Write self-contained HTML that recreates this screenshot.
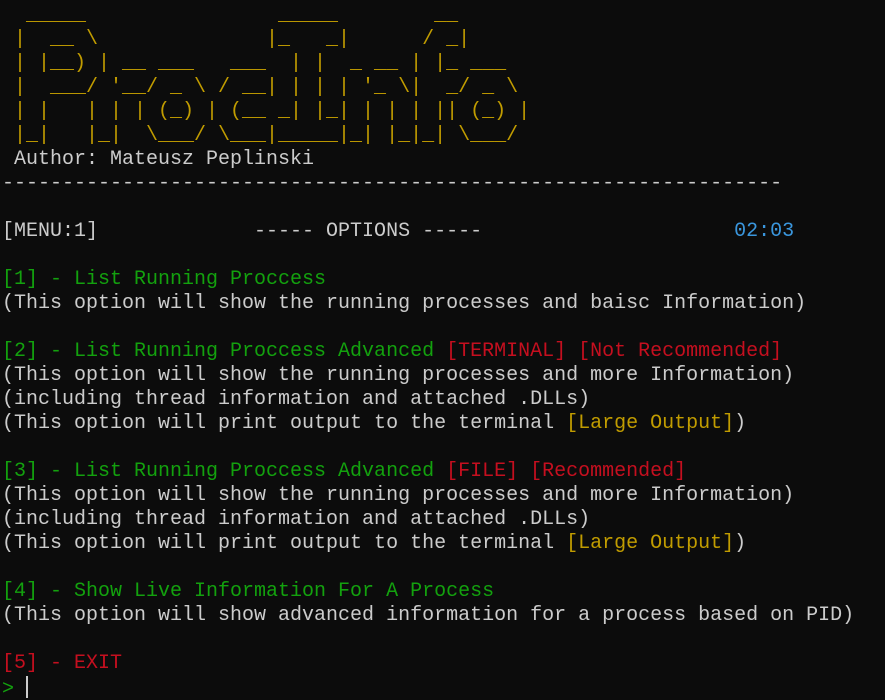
<!DOCTYPE html>
<html><head><meta charset="utf-8"><style>
html,body{margin:0;padding:0;background:#0c0c0c;width:885px;height:700px;overflow:hidden}
pre{margin:0;padding:4px 0 0 2px;font-family:"Liberation Mono","DejaVu Sans Mono",monospace;font-size:20px;line-height:24px;color:#cccccc;white-space:pre}
.y{color:#c19c00}.g{color:#13a10e}.r{color:#c50f1f}.b{color:#3a96dd}
.cur{display:inline-block;width:2px;height:22px;background:#cccccc;vertical-align:-4px;margin-left:0px}
</style></head><body><pre><span class="y">  _____                _____        __
 |  __ \              |_   _|      / _|
 | |__) | __ ___   ___  | |  _ __ | |_ ___
 |  ___/ '__/ _ \ / __| | | | '_ \|  _/ _ \
 | |   | | | (_) | (__ _| |_| | | | || (_) |
 |_|   |_|  \___/ \___|_____|_| |_|_| \___/</span>
 Author: Mateusz Peplinski
-----------------------------------------------------------------

[MENU:1]             ----- OPTIONS -----                     <span class="b">02:03</span>

<span class="g">[1] - List Running Proccess</span>
(This option will show the running processes and baisc Information)

<span class="g">[2] - List Running Proccess Advanced</span> <span class="r">[TERMINAL] [Not Recommended]</span>
(This option will show the running processes and more Information)
(including thread information and attached .DLLs)
(This option will print output to the terminal <span class="y">[Large Output]</span>)

<span class="g">[3] - List Running Proccess Advanced</span> <span class="r">[FILE] [Recommended]</span>
(This option will show the running processes and more Information)
(including thread information and attached .DLLs)
(This option will print output to the terminal <span class="y">[Large Output]</span>)

<span class="g">[4] - Show Live Information For A Process</span>
(This option will show advanced information for a process based on PID)

<span class="r">[5] - EXIT</span>
<span class="g">&gt;</span> <span class="cur"></span></pre></body></html>
